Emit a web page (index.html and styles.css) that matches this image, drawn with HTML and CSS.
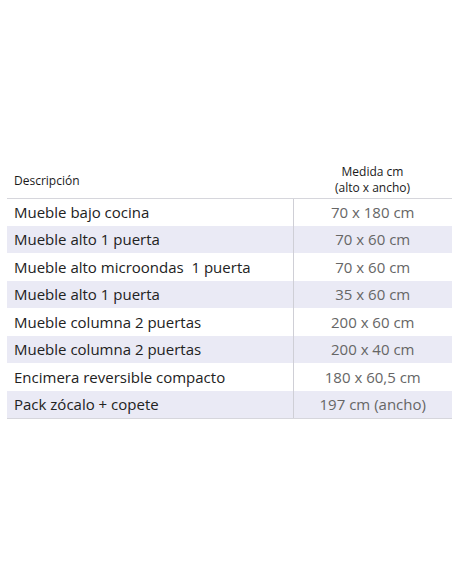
FILE: index.html
```html
<!DOCTYPE html>
<html lang="es">
<head>
<meta charset="utf-8">
<link rel="stylesheet" href="styles.css">
</head>
<body>
<div class="page">
  <table class="specs">
    <thead>
      <tr>
        <th class="desc">Descripción</th>
        <th class="size"><span class="line">Medida cm</span><span class="line">(alto x ancho)</span></th>
      </tr>
    </thead>
    <tbody>
      <tr><td class="desc">Mueble bajo cocina</td><td class="size">70 x 180 cm</td></tr>
      <tr class="alt"><td class="desc">Mueble alto 1 puerta</td><td class="size">70 x 60 cm</td></tr>
      <tr><td class="desc">Mueble alto microondas&nbsp; 1 puerta</td><td class="size">70 x 60 cm</td></tr>
      <tr class="alt"><td class="desc">Mueble alto 1 puerta</td><td class="size">35 x 60 cm</td></tr>
      <tr><td class="desc">Mueble columna 2 puertas</td><td class="size">200 x 60 cm</td></tr>
      <tr class="alt"><td class="desc">Mueble columna 2 puertas</td><td class="size">200 x 40 cm</td></tr>
      <tr><td class="desc">Encimera reversible compacto</td><td class="size">180 x 60,5 cm</td></tr>
      <tr class="alt"><td class="desc">Pack zócalo + copete</td><td class="size">197 cm (ancho)</td></tr>
    </tbody>
  </table>
</div>
</body>
</html>
```
FILE: styles.css
```css
html, body {
  margin: 0;
  padding: 0;
  background: #ffffff;
}
body {
  font-family: "Open Sans", "Noto Sans", sans-serif;
  color: #222222;
}
.page {
  padding: 160px 0 0 7px;
}
.specs {
  width: 445px;
  border-collapse: collapse;
  table-layout: fixed;
}
.specs th {
  box-sizing: border-box;
  font-size: 12px;
  font-weight: 500;
  line-height: 16px;
  height: 38px;
  padding: 0 7px;
  color: #1a1a1a;
  border-bottom: 1px solid #d6d6dc;
}
.specs th .line {
  display: block;
}
.specs th.desc {
  width: 286px;
  text-align: left;
  padding-top: 4px;
}
.specs th.size {
  text-align: center;
  padding-top: 2px;
}
.specs td {
  height: 27.5px;
  padding: 0 7px;
  font-size: 15px;
  box-sizing: border-box;
}
.specs td.desc {
  color: #222222;
  border-right: 1px solid #cfcfd6;
}
.specs td.size {
  text-align: center;
  color: #666666;
}
.specs tr.alt td {
  background: #eaeaf5;
}
.specs tbody tr:last-child td {
  border-bottom: 1px solid #d6d6dc;
}
```
